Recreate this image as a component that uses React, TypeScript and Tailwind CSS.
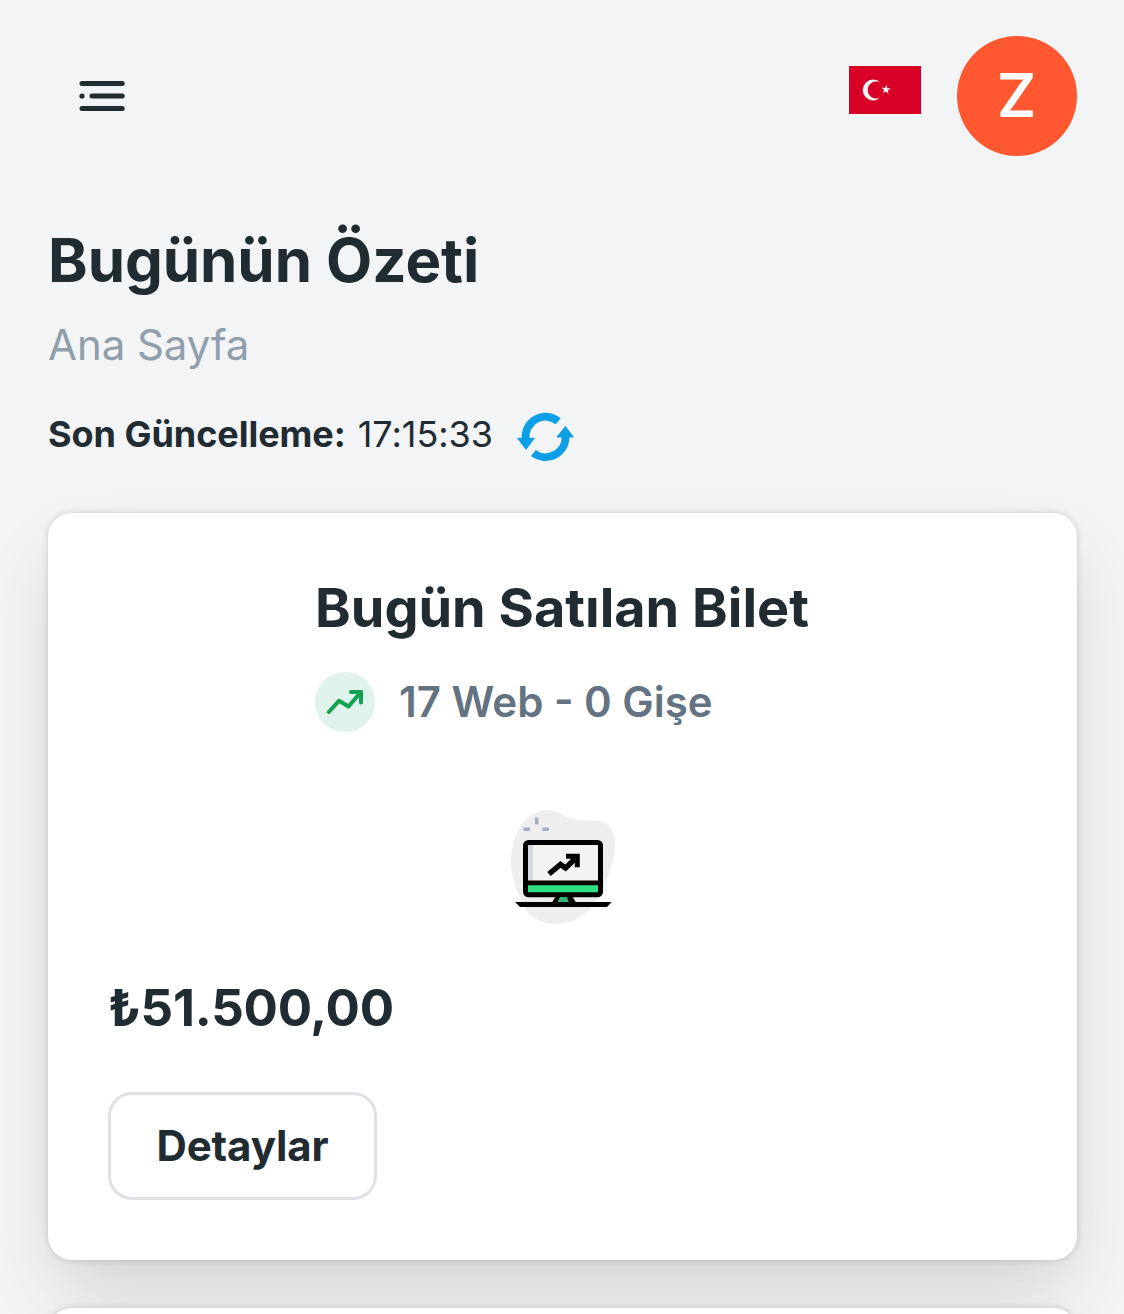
function MenuIcon() {
  return (
    <svg width="48" height="36" viewBox="0 0 48 36" fill="none" stroke="#212b32" strokeWidth="5" strokeLinecap="round">
      <path d="M4 5.4H44.2M14 18H44.2M4 30.5H44.2" />
      <circle cx="4" cy="18" r="2.6" fill="#212b32" stroke="none" />
    </svg>
  )
}

function TurkishFlag() {
  return (
    <svg width="72" height="48" viewBox="0 0 72 48">
      <rect width="72" height="48" fill="#d80027" />
      <path
        d="M31.5 31.3A8.5 8.5 0 1 1 31.5 16.7A10.4 10.4 0 1 0 31.5 31.3Z"
        fill="#f3f4f6"
      />
      <path
        d="M37.5 18.8L38.3 22.3L41.8 22.6L38.7 24.4L39.5 27.9L36.9 25.5L33.8 27.3L35.2 24L32.6 21.6L36.1 22Z"
        fill="#f3f4f6"
      />
    </svg>
  )
}

function RefreshIcon() {
  return (
    <svg width="60" height="52" viewBox="0 0 60 52">
      <path d="M10.7 28A20 20 0 0 1 43.3 10.3" fill="none" stroke="#0c9fe8" strokeWidth="7.8" />
      <path d="M2.7 27.3H19.3L11 38.3Z" fill="#0c9fe8" stroke="#0c9fe8" strokeLinejoin="round" />
      <path d="M50.5 25A20 20 0 0 1 18.4 42" fill="none" stroke="#0c9fe8" strokeWidth="7.8" />
      <path d="M42 26H58.3L50.4 15.5Z" fill="#0c9fe8" stroke="#0c9fe8" strokeLinejoin="round" />
    </svg>
  )
}

function TrendIcon() {
  return (
    <svg
      width="60"
      height="60"
      viewBox="0 0 60 60"
      fill="none"
      stroke="#12a150"
      strokeWidth="4"
      strokeLinecap="round"
      strokeLinejoin="round"
    >
      <path d="M13.8 40L24 28.8L33.5 34.5L45.5 20.5M36 20H46V30.5" />
    </svg>
  )
}

function MonitorIcon() {
  return (
    <svg width="120" height="120" viewBox="0 0 120 120">
      <path
        d="M42 3C54 2 59 9 70 12C83 15 99 10 107 20C115 32 112 47 108 60C101 83 91 105 69 114C51 121 31 116 22 101C15 89 9 73 8 57C8 29 20 7 42 3Z"
        fill="#eeeeef"
      />
      <path d="M20.5 22.3H27M39.5 22.3H46" stroke="#a4afc1" strokeWidth="3.5" />
      <path d="M33.7 10.5V17.5" stroke="#a4afc1" strokeWidth="3.5" />
      <rect x="22.5" y="35.5" width="75" height="52" rx="3" fill="#f3f3f1" />
      <rect x="24" y="37" width="6" height="37" fill="#d5dbe1" />
      <rect x="24" y="77" width="72" height="10" fill="#2fdf84" />
      <path d="M24 75.8H96" stroke="#000" strokeWidth="4.8" />
      <rect x="22.5" y="35.5" width="75" height="52.3" rx="3" fill="none" stroke="#000" strokeWidth="5" />
      <path d="M53 89H69L74 97H48Z" fill="#000" />
      <path d="M57 90H64L66 96H54Z" fill="#2fb574" />
      <path d="M12 95H108.7L104 100H17Z" fill="#000" />
      <path d="M46 67L57.5 57.5L62.5 61L73 51" fill="none" stroke="#000" strokeWidth="5.4" />
      <path d="M63 46.8H76.8V60.3H71.8V55L68 51.8H63Z" fill="#000" />
    </svg>
  )
}

const cardShadow = "shadow-[0_0_6px_rgba(50,50,50,0.2),0_36px_72px_-12px_rgba(60,60,60,0.2)]"

export default function App() {
  return (
    <div className="h-[1314px] overflow-hidden bg-[#f2f4f6] px-12 pt-9 font-['Inter',sans-serif] text-[#212b32]">
      <header className="flex h-[120px] items-center justify-between pl-[30px]">
        <MenuIcon />
        <div className="-mr-px flex items-center gap-9">
          <div className="mb-3">
            <TurkishFlag />
          </div>
          <div className="flex size-[120px] items-center justify-center rounded-full bg-[#ff5830] pb-0.5 pr-px text-[60px] font-semibold text-white">
            Z
          </div>
        </div>
      </header>

      <h1 className="mt-[59px] text-[60px] font-bold leading-[90px] tracking-[-0.06px]">Bugünün Özeti</h1>
      <p className="mt-2 text-[42px] leading-[63px] tracking-[-0.06px] text-[#919eab]">Ana Sayfa</p>
      <div className="mt-7 flex h-[60px] items-center text-[36px] tracking-[-0.04px]">
        <span className="font-bold">Son Güncelleme:</span>
        <span className="ml-3">17:15:33</span>
        <span className="ml-[22px] mt-1.5">
          <RefreshIcon />
        </span>
      </div>

      <section className={`-mr-px mt-[49px] flex h-[747px] flex-col rounded-[24px] bg-white px-[60px] pt-[60px] ${cardShadow}`}>
        <div className="flex justify-center pr-px">
          <div>
            <h2 className="text-[54px] font-bold leading-[70px]">Bugün Satılan Bilet</h2>
            <div className="mt-[29px] flex items-center">
              <div className="size-[60px] rounded-full bg-[#e0f3ea]">
                <TrendIcon />
              </div>
              <span className="ml-6 text-[42px] font-semibold leading-[60px] text-[#637381]">17 Web - 0 Gişe</span>
            </div>
          </div>
        </div>
        <div className="mt-[75px] flex justify-center">
          <MonitorIcon />
        </div>
        <div className="mt-[45px] text-[51px] font-bold leading-[72px] tracking-[-0.25px]">₺51.500,00</div>
        <button className="mt-12 h-[108px] w-[269px] rounded-[24px] border-3 border-[#dfe1e6] pb-px text-[42px] font-bold tracking-[-0.1px]">
          Detaylar
        </button>
      </section>

      <section className={`-mr-px mt-12 h-[747px] rounded-[24px] bg-white ${cardShadow}`} />
    </div>
  )
}
